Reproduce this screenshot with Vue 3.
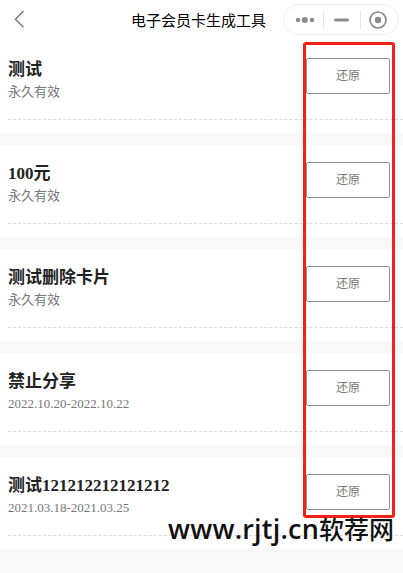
<template>
    <div class="page">
        <div class="navbar">
            <svg class="back" width="12" height="20" viewBox="0 0 12 20">
                <path d="M9.5 2 L1.5 10.2 L9.5 18.2" fill="none" stroke="#808080" stroke-width="1.6" />
            </svg>
            <div class="title">电子会员卡生成工具</div>
            <div class="capsule">
                <svg width="116" height="31" viewBox="0 0 116 31">
                    <circle cx="15" cy="16" r="2.2" fill="#8a8a8a" />
                    <circle cx="21.8" cy="16" r="3" fill="#8a8a8a" />
                    <circle cx="29" cy="16" r="2.2" fill="#8a8a8a" />
                    <path d="M40.5 7 V25 M77.5 7 V25" stroke="#e4e4e4" stroke-width="1" />
                    <path d="M52.5 16 H64.5" stroke="#8a8a8a" stroke-width="3" stroke-linecap="round" />
                    <circle cx="95" cy="16" r="8" fill="none" stroke="#8a8a8a" stroke-width="1.7" />
                    <circle cx="95" cy="16" r="3.2" fill="#8a8a8a" />
                </svg>
            </div>
        </div>

        <div v-for="card in cards" :key="card.name" class="card">
            <div class="row">
                <div class="info">
                    <div class="name">{{ card.name }}</div>
                    <div class="valid">{{ card.valid }}</div>
                </div>
                <button type="button" class="restore">还原</button>
            </div>
        </div>

        <div class="highlight"></div>
        <div class="watermark"><span class="site">www.rjtj.cn</span>软荐网</div>
    </div>
</template>

<script setup>
const cards = [
    { name: '测试', valid: '永久有效' },
    { name: '100元', valid: '永久有效' },
    { name: '测试删除卡片', valid: '永久有效' },
    { name: '禁止分享', valid: '2022.10.20-2022.10.22' },
    { name: '测试121212212121212', valid: '2021.03.18-2021.03.25' }
];
</script>

<style>
html,
body {
    margin: 0;
    height: 100%;
    background: #f8f8f8;
    overflow: hidden;
}
</style>

<style scoped>
.page {
    position: relative;
    width: 403px;
    height: 573px;
    overflow: hidden;
    background: #f8f8f8;
    font-family: "Liberation Serif", "Noto Sans CJK SC", serif;
}

.navbar {
    display: grid;
    grid-template-columns: 1fr auto 1fr;
    align-items: center;
    height: 41px;
    padding: 0 6px 3px 0;
    box-sizing: border-box;
    background: #fff;
}

.back {
    margin-left: 14px;
}

.title {
    font-family: "Noto Sans CJK SC", sans-serif;
    font-size: 15px;
    color: #000;
    white-space: nowrap;
}

.capsule {
    justify-self: end;
    width: 116px;
    height: 31px;
    margin-right: -2px;
    box-sizing: border-box;
    border: 1px solid #efefef;
    border-radius: 16px;
    overflow: hidden;
}

.capsule svg {
    display: block;
    margin: -1px;
}

.card {
    height: 92px;
    margin-bottom: 12px;
    padding-left: 8px;
    box-sizing: border-box;
    background: #fff;
}

.row {
    display: flex;
    justify-content: space-between;
    height: 79px;
    box-sizing: border-box;
    padding: 17px 13px 0 0;
    border-bottom: 1px dashed #dcdcdc;
}

.info {
    min-width: 0;
}

.name {
    margin-top: 2px;
    font-size: 17px;
    line-height: 20px;
    font-weight: 700;
    color: #222;
}

.valid {
    margin-top: 4px;
    font-size: 13px;
    line-height: 16px;
    color: #777;
}

.restore {
    flex: none;
    width: 84px;
    height: 36px;
    padding: 0 0 3px;
    border: 1px solid #909090;
    border-radius: 2px;
    background: #fff;
    font-family: "Noto Sans CJK SC", sans-serif;
    font-size: 12px;
    color: #777;
}

.highlight {
    position: absolute;
    left: 303px;
    top: 42px;
    width: 92px;
    height: 476px;
    box-sizing: border-box;
    border: 3px solid #f5201a;
    border-radius: 3px;
    pointer-events: none;
}

.watermark {
    position: absolute;
    left: 168px;
    top: 510px;
    font-family: "Noto Sans CJK SC", sans-serif;
    font-size: 25px;
    line-height: 36px;
    font-weight: 500;
    white-space: nowrap;
    color: #111;
}

.site {
    font-family: "Open Sans", sans-serif;
    font-size: 27px;
    font-weight: 600;
    letter-spacing: 0.2px;
}
</style>
